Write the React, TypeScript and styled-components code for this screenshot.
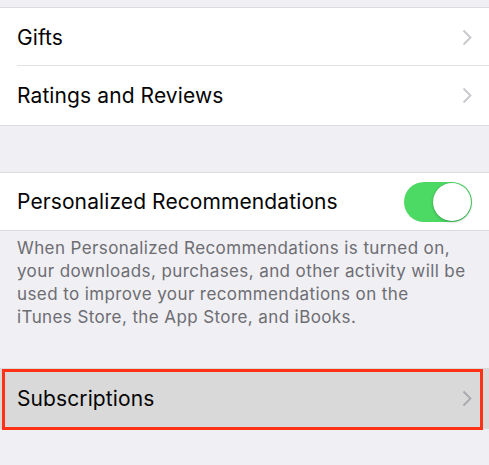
import React from "react";
import styled, { createGlobalStyle } from "styled-components";

const Global = createGlobalStyle`
  html, body { margin: 0; padding: 0; background: #efeff4; }
  body { font-family: Inter, "Noto Sans", sans-serif; -webkit-font-smoothing: antialiased; }
`;

const Page = styled.div`
  width: 489px;
  height: 465px;
  overflow: hidden;
  background: #efeff4;
  padding-top: 7px;
  box-sizing: border-box;
  display: flex;
  flex-direction: column;
`;

const Group = styled.div<{ $mt?: number }>`
  margin-top: ${(p) => p.$mt ?? 0}px;
  background: #fff;
  border-top: 1px solid #dcdce0;
  border-bottom: 1px solid #dcdce0;
  display: flex;
  flex-direction: column;
`;

const Row = styled.div<{ $h?: number; $sep?: boolean; $pressed?: boolean }>`
  position: relative;
  height: ${(p) => p.$h ?? 58}px;
  display: flex;
  align-items: center;
  justify-content: space-between;
  padding: 0 17px;
  background: ${(p) => (p.$pressed ? "#d9d9d9" : "#fff")};
  ${(p) =>
    p.$sep
      ? `&::after { content: ""; position: absolute; left: 17px; right: 0; bottom: 0; height: 1px; background: #e3e3e6; }`
      : ""}
`;

const Label = styled.span`
  font-size: 21px;
  color: #050505;
  letter-spacing: 0.1px;
`;

const Footer = styled.p`
  margin: 0;
  padding: 6px 17px 0;
  font-size: 17px;
  line-height: 23px;
  color: #6d6d72;
  letter-spacing: 0.4px;
  white-space: nowrap;
`;

const Toggle = styled.div`
  width: 68px;
  height: 40px;
  border-radius: 20px;
  background: #4cd964;
  position: relative;
  box-sizing: border-box;
`;

const Knob = styled.div`
  position: absolute;
  right: 1px;
  top: 1px;
  width: 38px;
  height: 38px;
  border-radius: 50%;
  background: #fff;
  box-shadow: 0 1px 3px rgba(0, 0, 0, 0.25), 0 0 0 0.5px rgba(0, 0, 0, 0.08);
`;

const Highlight = styled.div`
  position: absolute;
  left: 2px;
  right: 6px;
  top: 1px;
  bottom: -1px;
  border: 3px solid #ff3215;
  pointer-events: none;
`;

const PressedGroup = styled.div`
  margin-top: 39px;
  background: #d9d9d9;
  display: flex;
  flex-direction: column;
`;

const Chevron = ({ color = "#c7c7cc" }: { color?: string }) => (
  <svg width="10" height="17" viewBox="0 0 10 17">
    <path d="M1.5 1.5 L8.5 8.5 L1.5 15.5" fill="none" stroke={color} strokeWidth="1.8" />
  </svg>
);

export default function App() {
  return (
    <>
      <Global />
      <Page>
        <Group>
          <Row $sep>
            <Label>Gifts</Label>
            <Chevron />
          </Row>
          <Row $h={59}>
            <Label>Ratings and Reviews</Label>
            <Chevron />
          </Row>
        </Group>
        <Group $mt={46}>
          <Row $h={57}>
            <Label>Personalized Recommendations</Label>
            <Toggle>
              <Knob />
            </Toggle>
          </Row>
        </Group>
        <Footer>
          When Personalized Recommendations is turned on,
          <br />
          your downloads, purchases, and other activity will be
          <br />
          used to improve your recommendations on the
          <br />
          iTunes Store, the App Store, and iBooks.
        </Footer>
        <PressedGroup>
          <Row $h={61} $pressed>
            <Label>Subscriptions</Label>
            <Chevron color="#a9a9ae" />
            <Highlight />
          </Row>
        </PressedGroup>
      </Page>
    </>
  );
}
